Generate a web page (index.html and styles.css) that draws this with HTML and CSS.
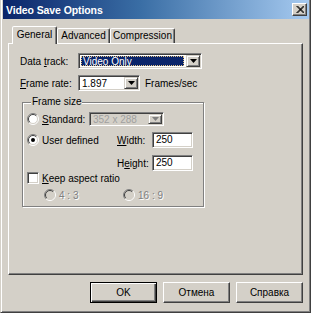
FILE: index.html
```html
<!DOCTYPE html>
<html>
<head>
<meta charset="utf-8">
<title>Video Save Options</title>
<link rel="stylesheet" href="styles.css">
</head>
<body>
<div class="window">
  <div class="titlebar">
    <span class="title">Video Save Options</span>
    <span class="close"><svg width="8" height="7" viewBox="0 0 8 7"><path d="M0.5 0 L7.5 7 M1.5 0 L8.5 7 M7.5 0 L0.5 7 M8.5 0 L1.5 7" stroke="#000" stroke-width="1" fill="none"/></svg></span>
  </div>
  <div class="content">
    <div class="tabs">
      <div class="tab active t-gen">General</div>
      <div class="tab t-adv">Advanced</div>
      <div class="tab t-comp">Compression</div>
    </div>
    <div class="panel">
      <div class="row r-track">
        <span class="label lbl-main">Data <u>t</u>rack:</span>
        <div class="combo combo-track">
          <span class="value selected">Video Only</span>
          <span class="ddbtn"><svg width="7" height="4" viewBox="0 0 7 4"><path d="M0 0 H7 L3.5 4 Z" fill="#000"/></svg></span>
        </div>
      </div>
      <div class="row r-rate">
        <span class="label lbl-main"><u>F</u>rame rate:</span>
        <div class="combo combo-rate">
          <span class="value">1.897</span>
          <span class="ddbtn"><svg width="7" height="4" viewBox="0 0 7 4"><path d="M0 0 H7 L3.5 4 Z" fill="#000"/></svg></span>
        </div>
        <span class="label unit">Frames/sec</span>
      </div>
      <div class="group">
        <span class="legend">Frame size</span>
        <div class="grow g-std">
          <svg class="radio" width="12" height="12" viewBox="0 0 12 12"><circle cx="6" cy="6" r="5" fill="#fff"/><path d="M2.1 9.9 A5.5 5.5 0 0 1 9.9 2.1" stroke="#808080" fill="none"/><path d="M9.9 2.1 A5.5 5.5 0 0 1 2.1 9.9" stroke="#fff" fill="none"/><path d="M2.8 9.2 A4.5 4.5 0 0 1 9.2 2.8" stroke="#404040" fill="none"/><path d="M9.2 2.8 A4.5 4.5 0 0 1 2.8 9.2" stroke="#d4d0c8" fill="none"/></svg>
          <span class="label glabel"><u>S</u>tandard:</span>
          <div class="combo combo-std disabled">
            <span class="value">352 x 288</span>
            <span class="ddbtn"><svg width="7" height="4" viewBox="0 0 7 4"><path d="M0 0 H7 L3.5 4 Z" fill="#808080"/></svg></span>
          </div>
        </div>
        <div class="grow g-user">
          <svg class="radio" width="12" height="12" viewBox="0 0 12 12"><circle cx="6" cy="6" r="5" fill="#fff"/><path d="M2.1 9.9 A5.5 5.5 0 0 1 9.9 2.1" stroke="#808080" fill="none"/><path d="M9.9 2.1 A5.5 5.5 0 0 1 2.1 9.9" stroke="#fff" fill="none"/><path d="M2.8 9.2 A4.5 4.5 0 0 1 9.2 2.8" stroke="#404040" fill="none"/><path d="M9.2 2.8 A4.5 4.5 0 0 1 2.8 9.2" stroke="#d4d0c8" fill="none"/><circle cx="6" cy="6" r="2" fill="#000"/></svg>
          <span class="label glabel wide">User defined</span>
          <span class="label dim"><u>W</u>idth:</span>
          <span class="edit">250</span>
        </div>
        <div class="grow g-height">
          <span class="label dim">H<u>e</u>ight:</span>
          <span class="edit">250</span>
        </div>
        <div class="grow g-keep">
          <span class="check"></span>
          <span class="label glabel"><u>K</u>eep aspect ratio</span>
        </div>
        <div class="grow g-ratio">
          <svg class="radio" width="12" height="12" viewBox="0 0 12 12"><circle cx="6" cy="6" r="5" fill="#d4d0c8"/><path d="M2.1 9.9 A5.5 5.5 0 0 1 9.9 2.1" stroke="#808080" fill="none"/><path d="M9.9 2.1 A5.5 5.5 0 0 1 2.1 9.9" stroke="#fff" fill="none"/><path d="M2.8 9.2 A4.5 4.5 0 0 1 9.2 2.8" stroke="#404040" fill="none"/><path d="M9.2 2.8 A4.5 4.5 0 0 1 2.8 9.2" stroke="#d4d0c8" fill="none"/></svg>
          <span class="label disabled-text ratio-lbl">4 : 3</span>
          <svg class="radio" width="12" height="12" viewBox="0 0 12 12"><circle cx="6" cy="6" r="5" fill="#d4d0c8"/><path d="M2.1 9.9 A5.5 5.5 0 0 1 9.9 2.1" stroke="#808080" fill="none"/><path d="M9.9 2.1 A5.5 5.5 0 0 1 2.1 9.9" stroke="#fff" fill="none"/><path d="M2.8 9.2 A4.5 4.5 0 0 1 9.2 2.8" stroke="#404040" fill="none"/><path d="M9.2 2.8 A4.5 4.5 0 0 1 2.8 9.2" stroke="#d4d0c8" fill="none"/></svg>
          <span class="label disabled-text">16 : 9</span>
        </div>
      </div>
    </div>
    <div class="buttons">
      <button class="btn default">OK</button>
      <button class="btn">Отмена</button>
      <button class="btn">Справка</button>
    </div>
  </div>
</div>
</body>
</html>
```

FILE: styles.css
```css
html, body {
  margin: 0;
  padding: 0;
  background: #d4d0c8;
}

body {
  font-family: "Liberation Sans", Arial, sans-serif;
  font-size: 10px;
  color: #000;
}

.window {
  width: 311px;
  height: 313px;
  box-sizing: border-box;
  background: #d4d0c8;
  border: 1px solid;
  border-top: none;
  border-color: #d4d0c8 #404040 #404040 #d4d0c8;
  box-shadow: inset 1px 0 0 #fff, inset -1px -1px 0 #808080;
  padding: 0 1px 1px 1px;
  display: flex;
  flex-direction: column;
}

.titlebar {
  height: 19px;
  margin-left: 1px;
  background: linear-gradient(90deg, #0a246a 0%, #3a6ea5 45%, #a6caf0 100%);
  display: flex;
  align-items: center;
  justify-content: space-between;
  padding: 0 2px 0 3px;
}

.title {
  color: #fff;
  font-weight: bold;
  font-size: 10.5px;
  letter-spacing: -0.1px;
}

.close {
  width: 15px;
  height: 13px;
  box-sizing: border-box;
  background: #d4d0c8;
  border: 1px solid;
  border-color: #fff #404040 #404040 #fff;
  box-shadow: inset -1px -1px 0 #808080;
  display: flex;
  align-items: center;
  justify-content: center;
}

.content {
  flex: 1;
  display: flex;
  flex-direction: column;
  padding: 7px 6px 0 6px;
}

.tabs {
  display: flex;
  align-items: flex-end;
  height: 17px;
  padding-left: 4px;
  position: relative;
  z-index: 1;
}

.tab {
  height: 15px;
  box-sizing: border-box;
  border: 1px solid;
  border-bottom: none;
  border-color: #fff #404040 transparent #fff;
  border-radius: 2px 2px 0 0;
  box-shadow: inset -1px 0 0 #808080;
  background: #d4d0c8;
  text-align: center;
  line-height: 13px;
}

.tab.active {
  height: 18px;
  margin-bottom: -1px;
  line-height: 15px;
}

.t-gen { width: 45px; }
.t-adv { width: 53px; }
.t-comp { width: 65px; }

.panel {
  height: 232px;
  box-sizing: border-box;
  border: 1px solid;
  border-color: #fff #404040 #404040 #fff;
  box-shadow: inset -1px -1px 0 #808080;
  padding: 9px 0 0 11px;
  display: flex;
  flex-direction: column;
}

.row {
  display: flex;
  align-items: center;
  height: 16px;
}

.r-rate { margin-top: 6px; }

.label { white-space: nowrap; }

.lbl-main { width: 58px; }

.unit { margin-left: 5px; }

.combo {
  height: 16px;
  box-sizing: border-box;
  border: 1px solid;
  border-color: #808080 #fff #fff #808080;
  box-shadow: inset 1px 1px 0 #404040, inset -1px -1px 0 #d4d0c8;
  background: #fff;
  display: flex;
  align-items: stretch;
  padding: 1px;
}

.combo .value {
  flex: 1;
  display: flex;
  align-items: center;
  padding-left: 2px;
}

.combo .value.selected {
  background: #0a246a;
  color: #fff;
  margin: 1px 2px 1px 1px;
  outline: 1px dotted #e0c080;
  outline-offset: -1px;
}

.ddbtn {
  width: 14px;
  box-sizing: border-box;
  background: #d4d0c8;
  border: 1px solid;
  border-color: #d4d0c8 #404040 #404040 #d4d0c8;
  box-shadow: inset 1px 1px 0 #fff, inset -1px -1px 0 #808080;
  display: flex;
  align-items: center;
  justify-content: center;
}

.combo-track { width: 124px; }
.combo-rate { width: 62px; }

.combo-std {
  width: 75px;
  height: 14px;
}

.combo.disabled {
  background: #d4d0c8;
  color: #a0a0a0;
}

.group {
  margin: 11px 0 0 2px;
  width: 182px;
  height: 105px;
  box-sizing: border-box;
  border: 1px solid #808080;
  box-shadow: inset 1px 1px 0 #fff, 1px 1px 0 #fff;
  padding: 0 0 0 4px;
  display: flex;
  flex-direction: column;
}

.legend {
  align-self: flex-start;
  height: 12px;
  line-height: 12px;
  margin: -7px 0 0 4px;
  padding: 0 1px;
  background: #d4d0c8;
}

.grow {
  display: flex;
  align-items: center;
}

.radio { flex: none; }

.glabel { margin-left: 3px; }

.g-std {
  margin-top: 4px;
  height: 14px;
}

.g-std .glabel { width: 47px; }

.g-user {
  margin-top: 6px;
  height: 16px;
}

.g-user .wide { width: 75px; }

.dim { width: 35px; }

.g-height {
  margin-top: 7px;
  height: 16px;
  padding-left: 90px;
}

.edit {
  width: 41px;
  height: 16px;
  box-sizing: border-box;
  border: 1px solid;
  border-color: #808080 #fff #fff #808080;
  box-shadow: inset 1px 1px 0 #404040, inset -1px -1px 0 #d4d0c8;
  background: #fff;
  padding: 0 3px;
  line-height: 14px;
}

.g-keep {
  margin-top: 1px;
  height: 12px;
}

.check {
  width: 12px;
  height: 12px;
  box-sizing: border-box;
  border: 1px solid;
  border-color: #808080 #fff #fff #808080;
  box-shadow: inset 1px 1px 0 #404040, inset -1px -1px 0 #d4d0c8;
  background: #fff;
}

.g-ratio {
  margin-top: 5px;
  height: 12px;
  padding-left: 17px;
}

.disabled-text {
  color: #808080;
  text-shadow: 1px 1px 0 #fff;
  margin-left: 3px;
}

.ratio-lbl { width: 64px; }

.buttons {
  display: flex;
  justify-content: flex-end;
  gap: 6px;
  margin-top: 7px;
}

.btn {
  width: 67px;
  height: 21px;
  box-sizing: border-box;
  font-family: "Liberation Sans", Arial, sans-serif;
  font-size: 10px;
  color: #000;
  background: #d4d0c8;
  border: 1px solid;
  border-color: #fff #404040 #404040 #fff;
  box-shadow: inset -1px -1px 0 #808080;
  padding: 0;
}

.btn.default {
  border: 1px solid #000;
  box-shadow: inset 1px 1px 0 #fff, inset -1px -1px 0 #404040, inset -2px -2px 0 #808080;
}
```
